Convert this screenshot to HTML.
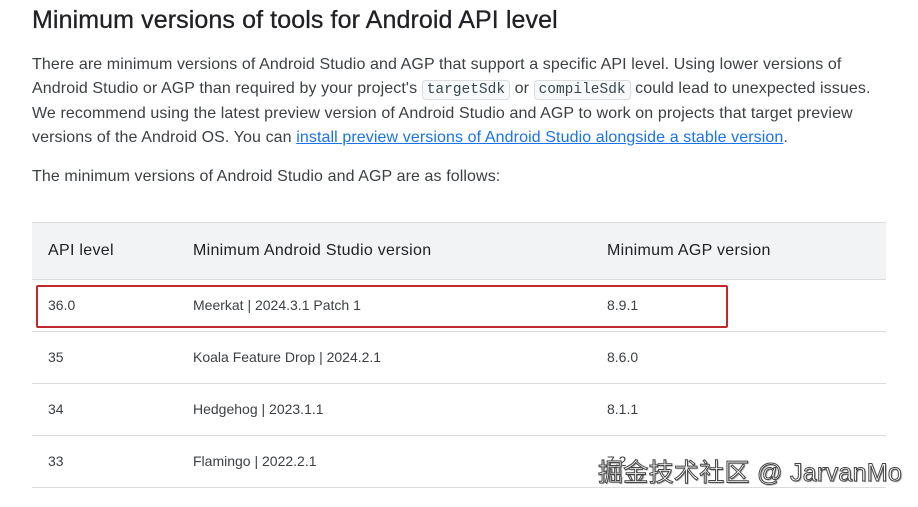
<!DOCTYPE html>
<html><head><meta charset="utf-8"><style>
body{margin:0;background:#fff;width:918px;height:507px;overflow:hidden;font-family:"Liberation Sans",Arial,sans-serif;color:#202124;position:relative}
h1{position:absolute;left:32px;top:6px;margin:0;font-size:25px;font-weight:normal;color:#202124;letter-spacing:0.1px;-webkit-text-stroke:0.3px #202124}
.p{position:absolute;left:32px;font-size:16px;line-height:24px;color:#3c4043;white-space:nowrap;letter-spacing:0.1px}
code{font-family:"Liberation Mono",monospace;font-size:14.5px;background:#f8f9fa;border:1px solid #dadce0;border-radius:4px;padding:1px 4px;color:#37474f;letter-spacing:0}
a{color:#1a73e8;text-decoration:underline}
.tbl{position:absolute;left:32px;top:222px;width:854px}
.hd{height:56px;background:#f1f3f4;border-top:1px solid #dadce0;border-bottom:1px solid #dadce0;position:relative;font-size:16px;color:#202124;letter-spacing:0.3px}
.row{height:51px;border-bottom:1px solid #dadce0;position:relative;font-size:14px;color:#3c4043}
.c{position:absolute;top:0;line-height:inherit}
.hd .c{line-height:56px}.row .c{line-height:51px}
.c1{left:16px}.c2{left:161px}.c3{left:575px}
.red{position:absolute;left:36px;top:285px;width:688px;height:39px;border:2px solid #c0282d;border-radius:2px}
.wm{position:absolute;left:598px;top:453px;font-size:25px;color:#fff;font-family:"Liberation Sans","Noto Sans CJK SC",sans-serif;-webkit-text-stroke:1px #444;text-shadow:1px 1px 1px #888;letter-spacing:0.3px}
</style></head><body>
<h1>Minimum versions of tools for Android API level</h1>
<div class="p" style="top:53px">There are minimum versions of Android Studio and AGP that support a specific API level. Using lower versions of<br>Android Studio or AGP than required by your project's <code>targetSdk</code> or <code>compileSdk</code> could lead to unexpected issues.<br>We recommend using the latest preview version of Android Studio and AGP to work on projects that target preview<br>versions of the Android OS. You can <a>install preview versions of Android Studio alongside a stable version</a>.</div>
<div class="p" style="top:165px">The minimum versions of Android Studio and AGP are as follows:</div>
<div class="tbl">
<div class="hd"><span class="c c1">API level</span><span class="c c2">Minimum Android Studio version</span><span class="c c3">Minimum AGP version</span></div>
<div class="row"><span class="c c1">36.0</span><span class="c c2">Meerkat | 2024.3.1 Patch 1</span><span class="c c3">8.9.1</span></div>
<div class="row"><span class="c c1">35</span><span class="c c2">Koala Feature Drop | 2024.2.1</span><span class="c c3">8.6.0</span></div>
<div class="row"><span class="c c1">34</span><span class="c c2">Hedgehog | 2023.1.1</span><span class="c c3">8.1.1</span></div>
<div class="row"><span class="c c1">33</span><span class="c c2">Flamingo | 2022.2.1</span><span class="c c3">7.2</span></div>
</div>
<div class="red"></div>
<div class="wm">掘金技术社区 @ JarvanMo</div>
</body></html>
